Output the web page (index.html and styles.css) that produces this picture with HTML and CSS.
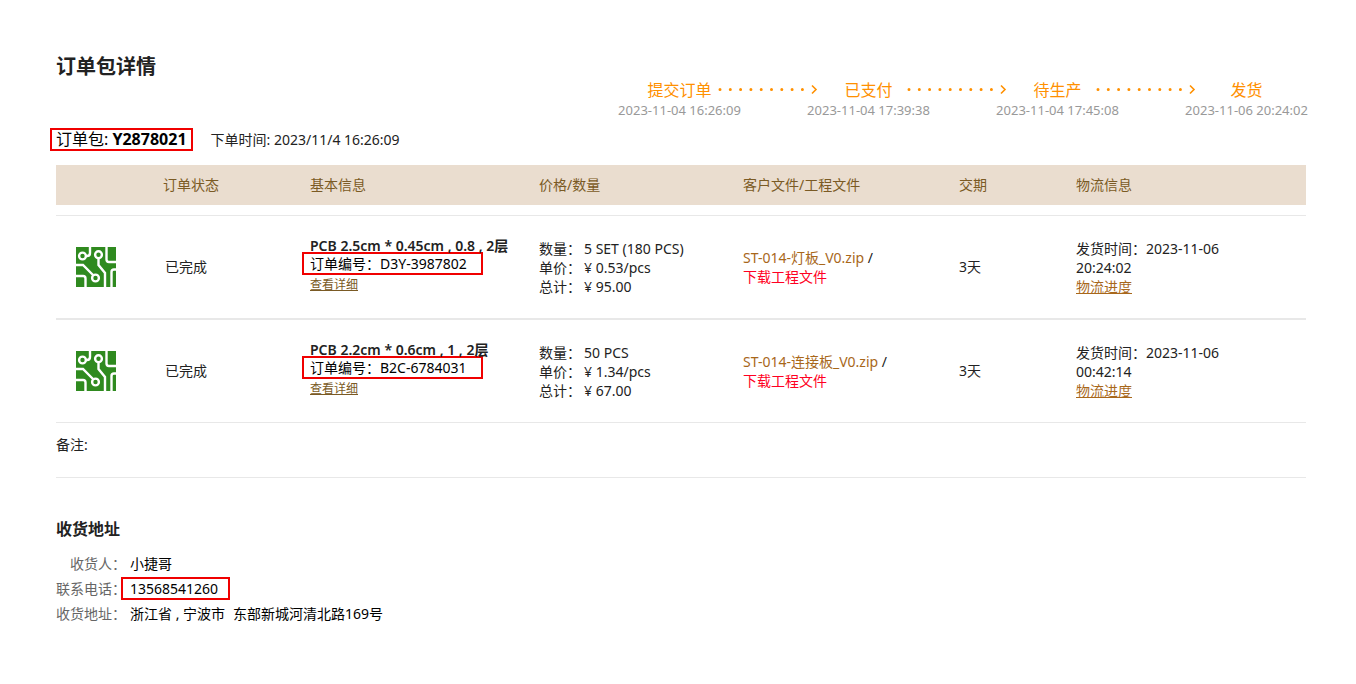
FILE: index.html
```html
<!DOCTYPE html>
<html lang="zh-CN">
<head>
    <meta charset="UTF-8">
    <meta name="viewport" content="width=device-width, initial-scale=1.0">
    <title>订单包详情</title>
    <link rel="stylesheet" href="styles.css">
</head>
<body>
    <!-- 公用图标 -->
    <svg class="sprite" aria-hidden="true">
        <symbol id="arrow" viewBox="0 0 100 12">
            <path d="M2 5.500H86" fill="none" stroke="#ff9000" stroke-width="3" stroke-linecap="round" stroke-dasharray="0 10.300"/>
            <path d="M94 1.500L98 5.500L94 9.500" fill="none" stroke="#ff9000" stroke-width="1.600"/>
        </symbol>
        <symbol id="pcb" viewBox="0 0 40 40">
            <rect width="40" height="40" fill="#2f8a1f"/>
            <g fill="none" stroke="#fff" stroke-width="2.400">
                <circle cx="6.500" cy="9" r="3.400"/>
                <path d="M10 9H11Q14 9 14 6V0"/>
                <circle cx="22.500" cy="7.700" r="3.400"/>
                <path d="M22.500 11V18L29 26V40"/>
                <path d="M30.500 0V12.500Q30.500 15 33 15H40"/>
                <path d="M0 18H7L17 28"/>
                <circle cx="19.500" cy="31" r="3.400"/>
                <path d="M0 29H7Q9.500 29 9.500 31.500V40"/>
                <path d="M40 22.500H38Q35.500 22.500 35.500 25V40"/>
            </g>
        </symbol>
    </svg>

    <div class="container">
        <h1>订单包详情</h1>

        <!-- 订单进度 -->
        <ol class="steps">
            <li>
                <div class="step-name"><span>提交订单</span><svg class="arrow"><use href="#arrow"/></svg></div>
                <time>2023-11-04 16:26:09</time>
            </li>
            <li>
                <div class="step-name"><span>已支付</span><svg class="arrow"><use href="#arrow"/></svg></div>
                <time>2023-11-04 17:39:38</time>
            </li>
            <li>
                <div class="step-name"><span>待生产</span><svg class="arrow"><use href="#arrow"/></svg></div>
                <time>2023-11-04 17:45:08</time>
            </li>
            <li>
                <div class="step-name"><span>发货</span></div>
                <time>2023-11-06 20:24:02</time>
            </li>
        </ol>

        <div class="package">
            <div class="mark package-no">订单包: <b>Y2878021</b></div>
            <div class="package-time">下单时间: 2023/11/4 16:26:09</div>
        </div>

        <!-- 订单列表 -->
        <table class="orders">
            <colgroup>
                <col class="col-pic">
                <col class="col-status">
                <col class="col-info">
                <col class="col-price">
                <col class="col-file">
                <col class="col-days">
                <col class="col-ship">
            </colgroup>
            <thead>
                <tr>
                    <th></th>
                    <th>订单状态</th>
                    <th>基本信息</th>
                    <th>价格/数量</th>
                    <th>客户文件/工程文件</th>
                    <th>交期</th>
                    <th>物流信息</th>
                </tr>
            </thead>
            <tbody>
                <tr class="spacer"><td colspan="7"></td></tr>
                <tr>
                    <td class="pic"><svg class="pcb"><use href="#pcb"/></svg></td>
                    <td class="status">已完成</td>
                    <td class="info">
                        <div class="spec">PCB 2.5cm * 0.45cm , 0.8 , 2层</div>
                        <div class="mark order-no">订单编号：<span>D3Y-3987802</span></div>
                        <a href="#" class="detail">查看详细</a>
                    </td>
                    <td class="lines">
                        <dl class="price">
                            <dt>数量：</dt><dd>5 SET (180 PCS)</dd>
                            <dt>单价：</dt><dd>¥ 0.53/pcs</dd>
                            <dt>总计：</dt><dd>¥ 95.00</dd>
                        </dl>
                    </td>
                    <td><a href="#" class="file">ST-014-灯板_V0.zip</a> /<br><a href="#" class="download">下载工程文件</a></td>
                    <td>3天</td>
                    <td class="lines ship">发货时间：2023-11-06 20:24:02<br><a href="#" class="track">物流进度</a></td>
                </tr>
                <tr>
                    <td class="pic"><svg class="pcb"><use href="#pcb"/></svg></td>
                    <td class="status">已完成</td>
                    <td class="info">
                        <div class="spec">PCB 2.2cm * 0.6cm , 1 , 2层</div>
                        <div class="mark order-no">订单编号：<span>B2C-6784031</span></div>
                        <a href="#" class="detail">查看详细</a>
                    </td>
                    <td class="lines">
                        <dl class="price">
                            <dt>数量：</dt><dd>50 PCS</dd>
                            <dt>单价：</dt><dd>¥ 1.34/pcs</dd>
                            <dt>总计：</dt><dd>¥ 67.00</dd>
                        </dl>
                    </td>
                    <td><a href="#" class="file">ST-014-连接板_V0.zip</a> /<br><a href="#" class="download">下载工程文件</a></td>
                    <td>3天</td>
                    <td class="lines ship">发货时间：2023-11-06 00:42:14<br><a href="#" class="track">物流进度</a></td>
                </tr>
            </tbody>
        </table>

        <div class="remark">备注:</div>

        <!-- 收货地址 -->
        <h2>收货地址</h2>
        <dl class="address">
            <dt>收货人：</dt>
            <dd>小捷哥</dd>
            <dt>联系电话：</dt>
            <dd><span class="mark phone">13568541260</span></dd>
            <dt>收货地址：</dt>
            <dd><span>浙江省 , 宁波市</span><span>东部新城河清北路169号</span></dd>
        </dl>
    </div>
</body>
</html>
```
FILE: styles.css
```css
* {
    box-sizing: border-box;
}
body {
    margin: 0;
    background-color: #fff;
    color: #222;
    font-family: "Noto Sans", "Noto Sans CJK SC", sans-serif;
    font-size: 14px;
    line-height: 19px;
}
h1, h2, dl, dd, ol {
    margin: 0;
    padding: 0;
}
.sprite {
    display: block;
    width: 0;
    height: 0;
}
.container {
    padding: 53px 50px 40px 56px;
}
h1 {
    font-size: 20px;
    line-height: 27px;
}
.mark {
    border: 2px solid #f00000;
    height: 23px;
    line-height: 19px;
    color: #000;
}

/* 订单进度 */
.steps {
    display: flex;
    justify-content: flex-end;
    gap: 70px;
    list-style: none;
}
.steps li {
    width: 119px;
    text-align: center;
}
.step-name {
    display: flex;
    align-items: center;
    height: 20px;
    color: #ff9000;
    font-size: 16px;
}
.step-name span {
    flex: none;
    width: 119px;
}
.arrow {
    flex: none;
    width: 100px;
    height: 12px;
    margin-left: -21px;
}
.steps time {
    display: block;
    margin: 0 -4px;
    color: #999;
    font-size: 13px;
    line-height: 21px;
}

.package {
    display: flex;
    align-items: center;
    gap: 18px;
    margin: 7px 0 14px -6px;
}
.package-no {
    padding: 0 4px;
    font-size: 16px;
}
.package-no b {
    font-weight: 700;
}

/* 订单列表 */
.orders {
    width: 100%;
    table-layout: fixed;
    border-collapse: collapse;
}
.col-pic { width: 107px; }
.col-status { width: 147px; }
.col-info { width: 229px; }
.col-price { width: 204px; }
.col-file { width: 216px; }
.col-days { width: 117px; }
.col-ship { width: 230px; }
.orders th {
    height: 40px;
    padding: 0 0 2px;
    background-color: #eaddcf;
    color: #7a5a24;
    font-weight: 400;
    text-align: left;
}
.orders td {
    height: 104px;
    padding: 0;
    border-bottom: 2px solid #e8e8e8;
}
.orders .spacer td {
    height: 10px;
    border-bottom: 1px solid #e8e8e8;
}
.orders tr:last-child td {
    height: 103px;
    border-bottom: 1px solid #e8e8e8;
}
.orders .pic {
    padding-left: 20px;
}
.orders .status {
    padding-left: 2px;
}
.orders .info {
    padding-bottom: 4px;
}
.orders .lines {
    padding-top: 2px;
}
.orders .ship {
    padding-right: 40px;
}
.pcb {
    display: block;
    width: 40px;
    height: 40px;
}
.spec {
    height: 16px;
    font-weight: 600;
    white-space: nowrap;
}
.order-no {
    width: 181px;
    margin-left: -8px;
    padding-left: 6px;
}
.detail {
    display: block;
    color: #7a5a24;
    font-size: 12px;
}
.price {
    display: grid;
    grid-template-columns: 45px auto;
}
.file, .track {
    color: #a8671a;
}
.file, .download {
    text-decoration: none;
}
.download {
    color: #ff0022;
}

.remark {
    height: 55px;
    padding-top: 12px;
    border-bottom: 1px solid #e8e8e8;
}

/* 收货地址 */
h2 {
    margin-top: 40px;
    font-size: 16px;
    line-height: 22px;
}
.address {
    display: grid;
    grid-template-columns: 70px auto;
    gap: 0 4px;
    margin-top: 11px;
    line-height: 25px;
    color: #000;
}
.address dt {
    color: #666;
    text-align: right;
}
.address dd {
    display: flex;
    align-items: center;
    gap: 8px;
}
.phone {
    width: 109px;
    margin-left: -9px;
    padding-left: 7px;
}
```
